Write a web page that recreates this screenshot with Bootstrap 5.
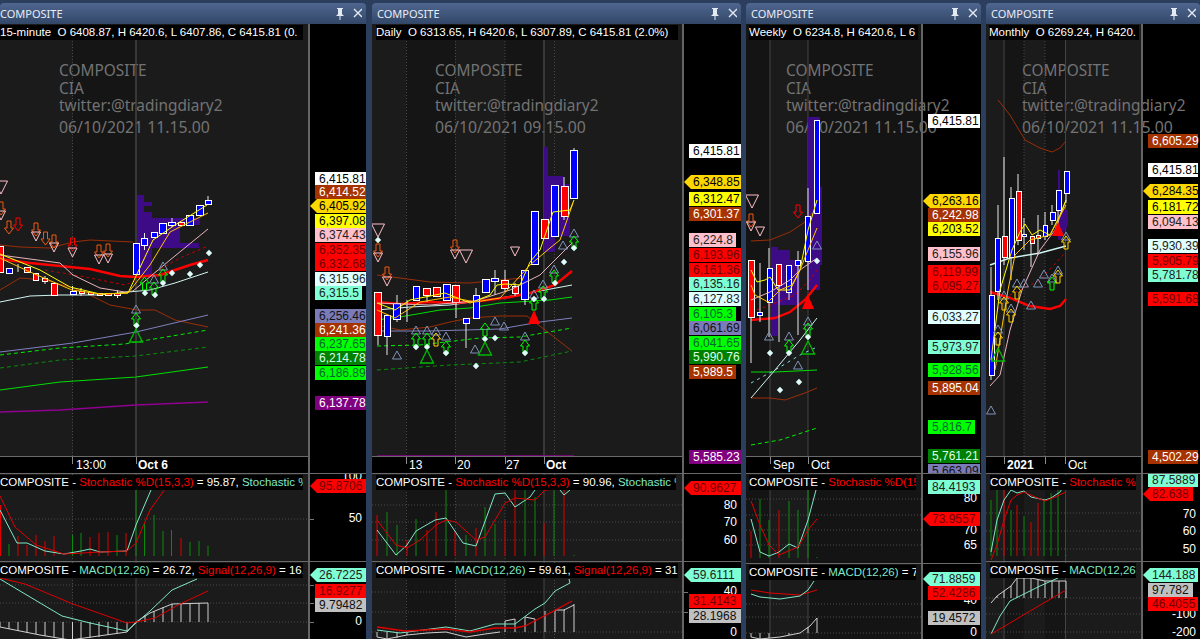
<!DOCTYPE html>
<html lang="en">
<head>
<meta charset="utf-8">
<title>COMPOSITE charts</title>
<link href="https://cdn.jsdelivr.net/npm/bootstrap@5.3.0/dist/css/bootstrap.min.css" rel="stylesheet">
<style>
html,body{height:639px;overflow:hidden;background:#2b3e5e;margin:0}
.desk{height:639px;padding-top:3px;font-family:"Liberation Sans",Arial,sans-serif;font-size:12px;line-height:14px}
.cwin{flex:none;overflow:hidden;border-radius:3px 3px 0 0;background:#000}
.w1{width:366px}.w2{width:369px;margin-left:6px}.w3{width:235px;margin-left:5px}.w4{width:214px;margin-left:5px}
.hd{height:21px;background:linear-gradient(#4f668f,#324768);color:#e8edf5;font:11px/21px "Noto Sans",sans-serif;padding-left:5px}
.w1 .hd{padding-left:0}
.hd svg{flex:none}
.pane{overflow:hidden;border-top:1px solid #6a6a6a;position:relative}
.pmain{height:449px;border-top:0}
.psto{height:88px}.w3 .psto{height:90px}
.pmac{flex:1 1 auto;height:78px}
.w3 .pmac{height:76px}
.plotcol{flex:none;position:relative}
.w1 .plotcol{width:308px;background:linear-gradient(90deg,#1b1b1b 73px,#151515 73px,#151515 136px,#1b1b1b 136px)}
.w2 .plotcol{width:310px;background:linear-gradient(90deg,#1b1b1b 34px,#151515 34px,#151515 83px,#1b1b1b 83px,#1b1b1b 133px,#151515 133px,#151515 172px,#1b1b1b 172px)}
.w3 .plotcol{width:175px;background:linear-gradient(90deg,#141414 24px,#1b1b1b 24px,#1b1b1b 62px,#141414 62px)}
.w4 .plotcol{width:155px;background:linear-gradient(90deg,#1b1b1b 18px,#151515 18px,#151515 38px,#1b1b1b 38px,#1b1b1b 59px,#151515 59px,#151515 79px,#1b1b1b 79px)}
.plotcol svg{display:block;position:relative;z-index:2}
.axis{flex:1 1 auto;position:relative;border-left:2px solid #646464;z-index:2}
.xstrip{height:17px;background:#000;border-top:1px solid #6a6a6a;position:relative;color:#fff;z-index:2}
.xstrip span{position:absolute;top:1px}
.xstrip i{position:absolute;top:0;width:1px;height:7px;background:#8a8a8a}
.xbold{font-weight:700}
.lg{position:absolute;top:1px;background:#000;color:#fff;height:15px;white-space:pre;overflow:hidden;z-index:3;font-size:11.5px}
.wm{position:absolute;top:38px;color:#737373;font:15.4px/18px "Noto Sans",sans-serif;white-space:nowrap;z-index:1;pointer-events:none}
.wm div:nth-child(3){line-height:15px}
.wm div:nth-child(4){margin-top:5px;font-size:15.8px}
.tg{position:absolute;left:5px;width:52px;height:14px;padding-left:4px;white-space:nowrap;color:#000;line-height:14px;font-size:12px}
.nar{width:47px}
.fl{left:0;width:57px;padding-left:9px;clip-path:polygon(0 50%,7px 0,100% 0,100% 100%,7px 100%)}
.kw{background:#fff}.kb{background:#a63200;color:#fff}.kg{background:#ffd700}.ky{background:#ff0}.kp{background:#ffc0cb;color:#222}
.kr{background:#f00;color:#700000}.kc{background:#e0ffff;color:#222}.ka{background:#7fffd4;color:#222}.ks{background:#7b7bb8;color:#111}
.kl{background:#0f0;color:#063}.kd{background:#008000;color:#dfe}.kv{background:#800080;color:#fff}.kh{background:#c0c0c0;color:#111}
.tk{position:absolute;right:4px;color:#fff;height:14px}
.tm{position:absolute;left:0;width:4px;height:1px;background:#777}
.tred{color:#f00}.taq{color:#7fe8c8}
.gr{stroke:#4a4a4a;stroke-dasharray:1 2;fill:none}
.vs{stroke:#444;fill:none}
.pu{fill:#3d0b86}
.cu{fill:#00f;stroke:#fff}.cd{fill:#f00;stroke:#fff}.wk{stroke:#e8e8e8;fill:none}
polyline,.ln{fill:none}
.lr{stroke:#f00;stroke-width:2.4}.lr1{stroke:#e00000}.ly{stroke:#ff0}.lo{stroke:#ffc400}.lb{stroke:#9a2e08}.lc{stroke:#cff5f0}.lp{stroke:#e8b4bc}
.ls{stroke:#8080c0}.ll{stroke:#0d0}.lq{stroke:#0e0;stroke-dasharray:4 3}.ld{stroke:#0a8a0a;stroke-dasharray:4 3}.lv{stroke:#900090;stroke-width:1.6}
.lx{stroke:#c00000;stroke-dasharray:3 3}.la{stroke:#7fe8c8}.lh{stroke:#c8c8c8}.lz{stroke:#7dd;stroke-dasharray:3 4}
.hr{stroke:#e00000;fill:none}.hg{stroke:#0a8a0a;fill:none}.hw{stroke:#cfcfcf;fill:none}
.mi{stroke:#ffc0cb;fill:none}.mo{stroke:#f05a10;fill:none}.mr{stroke:#f00;fill:none}.mu{stroke:#7f93b8;fill:none}.mg{stroke:#0b0;fill:none;stroke-width:1.3}
.mal{stroke:#0f0;fill:none}.may{stroke:#ffd200;fill:none}.mdi{fill:#dffdfb}.mrt{fill:#f00}
</style>
</head>
<body>
<svg class="d-none" width="0" height="0">
<defs>
<path id="ti" class="mi" d="M-4.5 0H4.5L0 9Z"/>
<path id="tI" class="mi" d="M-6.5 0H6.5L0 13Z"/>
<path id="ao" class="mo" d="M-2 0H2V7H4.5L0 13L-4.5 7H-2Z"/>
<path id="ar" class="mr" d="M-2 0H2V7H4.5L0 13L-4.5 7H-2Z"/>
<path id="tu" class="mu" d="M0 0L4.5 8H-4.5Z"/>
<path id="tg" class="mg" d="M0 0L6.5 13H-6.5Z"/>
<path id="al" class="mal" d="M0 0L4.5 6H2V13H-2V6H-4.5Z"/>
<path id="ay" class="may" d="M0 0L4.5 6H2V13H-2V6H-4.5Z"/>
<path id="di" class="mdi" d="M0 -3.2L3.2 0L0 3.2L-3.2 0Z"/>
<path id="rt" class="mrt" d="M0 0L6 14H-6Z"/>
<g id="pinx"><path d="M3 0H9V1H8V6L10 8H6.5V12H5.5V8H2L4 6V1H3Z" fill="#e4eaf3"/><path d="M20 1L28 9M28 1L20 9" stroke="#e4eaf3" stroke-width="1.4" fill="none"/></g>
</defs>
</svg>

<div class="desk d-flex">

<!-- 15-minute -->
<section class="cwin w1 d-flex flex-column">
<div class="hd d-flex align-items-center justify-content-between"><span>COMPOSITE</span><svg width="28" height="12" viewBox="0 0 28 12" class="me-1"><use href="#pinx"/></svg></div>
<div class="pane pmain d-flex">
<div class="wm" style="left:59px"><div>COMPOSITE</div><div>CIA</div><div>twitter:@tradingdiary2</div><div>06/10/2021 11.15.00</div></div>
<div class="plotcol">
<div class="lg" style="left:0;width:303px">15-minute  O 6408.87, H 6420.6, L 6407.86, C 6415.81 (0.</div>
<svg width="308" height="432" viewBox="0 24 308 432">
<path class="gr" d="M72.5 38V456"/><path class="vs" d="M136 38V456" stroke-width="1.5"/>
<path class="pu" d="M137 195H144V202H152V206H144V212H152V218H200V225H180V243H199V248H152V275H137Z"/>
<polyline class="lb" points="0,245 20,247 50,248 73,242 90,240 133,242"/>
<polyline class="lb" points="0,290 20,278 45,280 73,288 90,295 110,305 137,310 155,310 175,320 208,327"/>
<polyline class="lv" points="0,412 60,410 136,405 208,402"/>
<polyline class="ll" stroke-width="1.2" points="0,390 60,382 136,377 208,367"/>
<polyline class="ld" points="0,368 60,360 136,356 208,347"/>
<polyline class="lq" points="0,355 60,348 125,344 136,342 208,330"/>
<polyline class="ls" points="0,352 73,343 136,332 208,315"/>
<polyline class="lc" points="0,302 30,296 60,295 100,295 128,292 150,290 175,283 208,272"/>
<polyline class="lx" points="45,270 80,276 125,285 150,275 180,258 208,246"/>
<polyline class="lr" points="0,259 30,263 60,266 90,269 120,276 136,277 160,275 175,270 190,265 208,260"/>
<path class="wk" d="M18 264V272M72.5 286V295M81 288V296M45 276V284M117.5 290V298M144.5 233V250M172 218V227M208 196V204"/>
<rect class="cd" x="-2.5" y="246.5" width="6" height="26"/><rect class="cu" x="6.5" y="268.5" width="6" height="5"/>
<rect class="cd" x="24.5" y="267.5" width="6" height="5"/><rect class="cd" x="33.5" y="273.5" width="5" height="7"/>
<rect class="cd" x="42.5" y="278.5" width="5" height="3"/><rect class="cd" x="51.5" y="283.5" width="6" height="12"/>
<rect class="cu" x="70.5" y="291.5" width="6" height="3"/><rect class="cd" x="79.5" y="291.5" width="5" height="2"/>
<rect class="cd" x="88.5" y="292.5" width="5" height="2"/><rect class="cd" x="97.5" y="293.5" width="5" height="2"/>
<rect class="cd" x="105.5" y="293.5" width="6" height="2"/><rect class="cd" x="114.5" y="293.5" width="6" height="2"/>
<rect class="cu" x="133.5" y="243.5" width="6" height="31"/><rect class="cu" x="141.5" y="238.5" width="6" height="7"/>
<rect class="cu" x="151.5" y="232.5" width="6" height="5"/><rect class="cu" x="159.5" y="223.5" width="7" height="10"/>
<rect class="cu" x="168.5" y="222.5" width="7" height="3"/><rect class="cd" x="178.5" y="222.5" width="6" height="3"/>
<rect class="cu" x="186.5" y="215.5" width="7" height="10"/><rect class="cu" x="196.5" y="205.5" width="7" height="10"/>
<rect class="cu" x="205.5" y="200.5" width="6" height="4"/>
<polyline class="lp" points="0,255 30,259 60,263 73,275 100,288 125,292 133,291 170,260 208,229"/>
<polyline class="ly" points="0,254 40,270 70,287 100,294 128,293 153,240 175,225 207,205"/>
<polyline class="lo" points="0,258 30,272 72,290 100,294 128,293 150,265 170,232 190,222 208,213"/>
<use href="#tI" x="1" y="181"/><use href="#ao" x="1" y="202"/><use href="#ti" x="1" y="211"/>
<use href="#ao" x="9" y="221"/><use href="#ar" x="18" y="218"/><use href="#ao" x="36" y="223"/><use href="#ti" x="36" y="232"/>
<use href="#ao" x="45.5" y="232"/><use href="#ao" x="54" y="235"/><use href="#ti" x="54" y="243"/>
<use href="#ar" x="72.5" y="238"/><use href="#ti" x="72.5" y="248"/><use href="#ao" x="99" y="245"/><use href="#ti" x="99" y="255"/>
<use href="#ao" x="108" y="244"/><use href="#ti" x="108" y="254"/>
<use href="#tu" x="136" y="305"/><use href="#al" x="136" y="313"/><use href="#di" x="136.5" y="325.5"/><use href="#tg" x="136" y="329"/>
<use href="#al" x="144.5" y="277"/><use href="#di" x="145" y="293"/><use href="#tu" x="154" y="275"/><use href="#al" x="154" y="282"/><use href="#di" x="155" y="295"/>
<use href="#tu" x="163" y="262"/><use href="#al" x="163" y="269"/><use href="#di" x="163" y="283"/>
<use href="#di" x="172" y="273"/><use href="#di" x="190" y="274"/><use href="#di" x="200" y="265"/><use href="#di" x="209" y="253"/>
</svg>
<div class="xstrip"><i style="left:72px"></i><i style="left:136px"></i><span style="left:76px">13:00</span><span class="xbold" style="left:138px">Oct 6</span></div>
</div>
<div class="axis">
<div class="tg kw" style="top:148px">6,415.81</div><div class="tg kb" style="top:161px">6,414.52</div>
<div class="tg kg fl" style="top:175px">6,405.92</div><div class="tg ky" style="top:190px">6,397.08</div>
<div class="tg kp" style="top:204px">6,374.43</div><div class="tg kr" style="top:219px">6,352.35</div>
<div class="tg kr" style="top:233px">6,332.68</div><div class="tg kc" style="top:248px">6,315.96</div>
<div class="tg ka nar" style="top:262px">6,315.5</div><div class="tg ks" style="top:285px">6,256.46</div>
<div class="tg kb" style="top:299px">6,241.36</div><div class="tg kl" style="top:313px">6,237.65</div>
<div class="tg kd" style="top:327px">6,214.78</div><div class="tg kl" style="top:342px">6,186.89</div>
<div class="tg kv" style="top:372px">6,137.78</div>
</div>
</div>
<div class="pane psto d-flex">
<div class="plotcol">
<div class="lg" style="left:0;width:303px">COMPOSITE - <span class="tred">Stochastic %D(15,3,3)</span> = 95.87, <span class="taq">Stochastic %D(15,3,3)</span></div>
<svg width="308" height="87" viewBox="0 474 308 87">
<path class="gr" d="M0 519H308M72.5 474V561"/><path class="vs" d="M136 474V561"/>
<path class="hr" d="M.5 556V505M18 556V536M27 556V545M36 556V535M45 556V541M54 556V536M90 556V537M99 556V533M108 556V532M126 556V533M181 556V538"/>
<path class="hg" d="M9 556V544M72.5 556V535M81 556V533M117 556V535M136 556V490M144.5 556V523M154 556V515M163 556V531M171.5 556V530M190 556V542M199 556V541M208 556V546"/>
<polyline class="la" points="0,510 17,543 27,543 45,551 64,554 81,551 90,549 100,552 127,551 136,525 151,490"/>
<polyline class="lr1" points="0,496 15,527 36,545 64,554 100,552 127,551 136,543 150,510 165,489"/>
</svg>
</div>
<div class="axis">
<div class="tm" style="top:45px"></div><div class="tk" style="top:-5px">100</div><div class="tk" style="top:37px">50</div>
<div class="tg kr fl" style="top:5px">95.8706</div>
</div>
</div>
<div class="pane pmac d-flex">
<div class="plotcol">
<div class="lg" style="left:0;width:303px">COMPOSITE - <span class="taq">MACD(12,26)</span> = 26.72, <span class="tred">Signal(12,26,9)</span> = 16.</div>
<svg width="308" height="78" viewBox="0 561 308 78">
<path class="gr" d="M0 584H308M0 602H308M0 621H308M72.5 561V639"/><path class="vs" d="M136 561V639"/>
<path class="hw" d="M0 626L40 634 70 639 127 631 136 621 150 612 172 603 208 602V621M0 621V626M9 621V628M18 621V630M27 621V632M36 621V633M45 621V635M54 621V636M63 621V638M72.5 621V639M81 621V638M90 621V637M99 621V636M108 621V634M117 621V633M127 621V631M145 621V614M154 621V610M163 621V606M172 621V603M181 621V603M190 621V603M199 621V602"/>
<polyline class="la" points="0,578 20,590 62,615 90,622 127,630 136,622 150,610 172,589 197,578"/>
<polyline class="lr1" points="0,577 25,583 73,603 127,622 136,621 155,617 180,603 208,590"/>
</svg>
</div>
<div class="axis">
<div class="tm" style="top:23px"></div><div class="tm" style="top:41px"></div><div class="tm" style="top:60px"></div>
<div class="tk" style="top:52px">0</div>
<div class="tg ka fl" style="top:6px">26.7225</div><div class="tg kr" style="top:22px">16.9277</div><div class="tg kh" style="top:36px">9.79482</div>
</div>
</div>
</section>

<!-- Daily -->
<section class="cwin w2 d-flex flex-column">
<div class="hd d-flex align-items-center justify-content-between"><span>COMPOSITE</span><svg width="28" height="12" viewBox="0 0 28 12" class="me-1"><use href="#pinx"/></svg></div>
<div class="pane pmain d-flex">
<div class="wm" style="left:63px"><div>COMPOSITE</div><div>CIA</div><div>twitter:@tradingdiary2</div><div>06/10/2021 09.15.00</div></div>
<div class="plotcol">
<div class="lg" style="left:4px;width:302px">Daily  O 6313.65, H 6420.6, L 6307.89, C 6415.81 (2.0%)</div>
<svg width="310" height="432" viewBox="372 24 310 432">
<path class="gr" d="M406.5 38V456M455.5 38V456M505 38V456M554.5 38V456"/><path class="vs" d="M544 38V456" stroke-width="1.5"/>
<path class="pu" d="M544 147H548V176H563V184H570V236H555V252H544Z"/>
<polyline class="lb" points="377,275 400,278 430,282 470,283 500,280 523,278"/>
<polyline class="lb" points="377,325 400,330 430,327 450,322 470,318 500,316 527,316 545,330 572,351"/>
<polyline class="ld" points="377,370 450,365 520,362 572,351"/>
<polyline class="lq" points="377,346 420,345 480,338 520,337 572,328"/>
<polyline class="ls" points="377,331 430,331 500,329 540,322 572,318"/>
<polyline class="lv" stroke-width="2" points="377,456 574,456"/>
<polyline class="ll" points="377,320 400,317 440,310 470,308 500,303 550,300 572,297"/>
<polyline class="lc" points="377,310 410,307 450,305 500,298 540,291 572,285"/>
<polyline class="lr" points="377,302 400,304 430,302 455,303 480,301 510,297 530,293 555,285 572,271"/>
<path class="wk" d="M378 335V345M387 336V355M397 295V322M407 300V322M427 295V302M456 302V318M466 323V348M476 288V318M495 270V295M505 270V292M515 283V296M525 299V305M564 177V220M574 148V198"/>
<rect class="cd" x="374.5" y="292.5" width="7" height="43"/><rect class="cu" x="384.5" y="315.5" width="6" height="21"/>
<rect class="cu" x="393.5" y="303.5" width="7" height="16"/><rect class="cu" x="413.5" y="286.5" width="6" height="14"/>
<rect class="cd" x="423.5" y="288.5" width="7" height="7"/><rect class="cd" x="433.5" y="287.5" width="7" height="9"/>
<rect class="cu" x="443.5" y="284.5" width="7" height="16"/><rect class="cd" x="452.5" y="285.5" width="7" height="17"/>
<rect class="cu" x="463.5" y="318.5" width="6" height="5"/><rect class="cu" x="473.5" y="295.5" width="6" height="23"/>
<rect class="cu" x="482.5" y="279.5" width="7" height="13"/><rect class="cu" x="491.5" y="278.5" width="7" height="3"/>
<rect class="cd" x="501.5" y="280.5" width="7" height="8"/><rect class="cd" x="512.5" y="286.5" width="6" height="7"/>
<rect class="cu" x="521.5" y="270.5" width="7" height="29"/><rect class="cu" x="531.5" y="211.5" width="7" height="53"/>
<rect class="cd" x="541.5" y="219.5" width="7" height="19"/><rect class="cu" x="551.5" y="185.5" width="7" height="51"/>
<rect class="cd" x="561.5" y="186.5" width="7" height="30"/><rect class="cu" x="570.5" y="150.5" width="7" height="48"/>
<polyline class="lp" points="377,303 430,305 475,301 510,290 540,275 555,260 572,243"/>
<polyline class="ly" points="377,303 395,310 410,300 430,296 445,293 470,303 490,295 497,285 505,284 520,285 530,262 540,250 553,212 570,210 574,200"/>
<polyline class="lo" points="377,310 395,318 420,302 450,297 475,302 500,298 530,265 550,248 560,240 573,203"/>
<use href="#tI" x="378" y="224"/><use href="#di" x="378" y="240"/><use href="#ao" x="378" y="244"/><use href="#ti" x="378" y="253"/>
<use href="#ao" x="387" y="267"/><use href="#ti" x="387" y="277"/><use href="#tu" x="397" y="351"/>
<use href="#tu" x="416" y="326"/><use href="#al" x="416" y="333"/><use href="#di" x="416" y="347"/>
<use href="#tu" x="427" y="326"/><use href="#al" x="427" y="333"/><use href="#di" x="427" y="347"/>
<use href="#tu" x="436" y="327"/><use href="#ay" x="436" y="333"/><use href="#tg" x="427" y="350"/>
<use href="#tu" x="446" y="332"/><use href="#al" x="446" y="341"/><use href="#di" x="446" y="353"/>
<use href="#ao" x="455" y="240"/><use href="#ti" x="455" y="250"/><use href="#tI" x="466" y="250"/>
<use href="#tu" x="475" y="345"/><use href="#al" x="485" y="323"/><use href="#di" x="485" y="339"/><use href="#tg" x="485" y="342"/>
<use href="#tu" x="495" y="317"/><use href="#tu" x="504" y="322"/><use href="#di" x="495" y="338"/><use href="#ti" x="515" y="247"/>
<use href="#tu" x="525" y="332"/><use href="#al" x="525" y="340"/><use href="#di" x="525" y="353"/><use href="#rt" x="534" y="310"/>
<use href="#tu" x="534" y="290"/><use href="#al" x="534" y="297"/><use href="#di" x="534" y="299"/>
<use href="#tu" x="543" y="280"/><use href="#al" x="543" y="286"/><use href="#di" x="544" y="299"/>
<use href="#tu" x="554" y="265"/><use href="#al" x="554" y="270"/><use href="#di" x="555" y="283"/>
<use href="#tu" x="563" y="241"/><use href="#di" x="564" y="262"/><use href="#tu" x="574" y="229"/><use href="#al" x="574" y="236"/><use href="#di" x="574" y="248"/>
<use href="#di" x="476" y="366"/>
</svg>
<div class="xstrip"><i style="left:34px"></i><i style="left:83px"></i><i style="left:133px"></i><i style="left:172px"></i><span style="left:37px">13</span><span style="left:85px">20</span><span style="left:134px">27</span><span class="xbold" style="left:174px">Oct</span></div>
</div>
<div class="axis">
<div class="tg kw" style="top:120px">6,415.81</div><div class="tg kg fl" style="top:151px">6,348.85</div>
<div class="tg ky" style="top:168px">6,312.47</div><div class="tg kb" style="top:183px">6,301.37</div>
<div class="tg kp nar" style="top:209px">6,224.8</div><div class="tg kr" style="top:224px">6,193.96</div>
<div class="tg kr" style="top:239px">6,161.36</div><div class="tg ka" style="top:253px">6,135.16</div>
<div class="tg kc" style="top:268px">6,127.83</div><div class="tg kl nar" style="top:283px">6,105.3</div>
<div class="tg ks" style="top:297px">6,061.69</div><div class="tg kl" style="top:312px">6,041.65</div>
<div class="tg kd" style="top:326px">5,990.76</div><div class="tg kb nar" style="top:341px">5,989.5</div>
<div class="tg kv" style="top:426px">5,585.23</div>
</div>
</div>
<div class="pane psto d-flex">
<div class="plotcol">
<div class="lg" style="left:4px;width:300px">COMPOSITE - <span class="tred">Stochastic %D(15,3,3)</span> = 90.96, <span class="taq">Stochastic %D(15,3,3)</span></div>
<svg width="310" height="87" viewBox="372 474 310 87">
<path class="gr" d="M372 505H682M372 522H682M372 540H682M406.5 474V561M455.5 474V561M505 474V561M554.5 474V561"/><path class="vs" d="M544 474V561"/>
<path class="hr" d="M377 556V515M407 556V540M427 556V530M436 556V512M455 556V530M476 556V528M505 556V520M515 556V490M544 556V523M564 556V490"/>
<path class="hg" d="M387 556V512M397 556V525M416 556V519M446 556V490M466 556V535M485 556V507M495 556V524M525 556V490M535 556V497M554 556V490M574 556V555"/>
<polyline class="la" points="377,530 396,555 407,545 416,531 435,520 446,518 463,543 476,546 495,494 505,493 515,507 530,497 535,490"/>
<polyline class="la" points="560,490 564,495 570,490"/>
<polyline class="lr1" points="377,520 396,545 407,548 420,540 436,525 446,520 456,522 476,540 485,537 505,503 515,498 535,500 545,490 575,488"/>
</svg>
</div>
<div class="axis">
<div class="tk" style="top:24px">80</div><div class="tk" style="top:41px">70</div><div class="tk" style="top:59px">60</div>
<div class="tg kr fl" style="top:7px">90.9627</div>
</div>
</div>
<div class="pane pmac d-flex">
<div class="plotcol">
<div class="lg" style="left:4px;width:302px">COMPOSITE - <span class="taq">MACD(12,26)</span> = 59.61, <span class="tred">Signal(12,26,9)</span> = 31</div>
<svg width="310" height="78" viewBox="372 561 310 78">
<path class="gr" d="M372 591H682M372 611H682M372 631H682M406.5 561V639M455.5 561V639M505 561V639M554.5 561V639"/><path class="vs" d="M544 561V639"/>
<path class="hw" d="M377 631V636L387 638 407 634 427 632 446 631 466 636 485 633 500 631M387 631V638M397 631V637M407 631V634M505 631V620L515 618M515 631V618M525 631V616L535 618M535 631V618M545 631V610M555 631V609L565 609M564 631V609L574 604M574 631V603"/>
<polyline class="la" points="377,629 400,632 446,626 470,630 495,623 515,623 535,608 545,602 555,590 570,582 569,578"/>
<polyline class="lr1" stroke-width="1.3" points="377,626 405,630 446,628 470,631 495,627 515,627 525,625 550,612 572,600"/>
</svg>
</div>
<div class="axis">
<div class="tm" style="top:30px"></div><div class="tm" style="top:50px"></div>
<div class="tk" style="top:22px">40</div><div class="tk" style="top:63px">0</div>
<div class="tg ka fl" style="top:6px">59.6111</div><div class="tg kr" style="top:32px">31.4143</div><div class="tg kh" style="top:47px">28.1968</div>
</div>
</div>
</section>

<!-- Weekly -->
<section class="cwin w3 d-flex flex-column">
<div class="hd d-flex align-items-center justify-content-between"><span>COMPOSITE</span><svg width="28" height="12" viewBox="0 0 28 12" class="me-1"><use href="#pinx"/></svg></div>
<div class="pane pmain d-flex">
<div class="wm" style="left:40px"><div>COMPOSITE</div><div>CIA</div><div>twitter:@tradingdiary2</div><div>06/10/2021 11.15.00</div></div>
<div class="plotcol">
<div class="lg" style="left:3px;width:169px">Weekly  O 6234.8, H 6420.6, L 6</div>
<svg width="175" height="432" viewBox="746 24 175 432">
<path class="vs" d="M770 38V456M808 38V456"/>
<path class="pu" d="M771 247H778V250H790V260H800V305H771ZM771 305H778V336H771ZM808 117H820V187H822V265H820V290H808Z"/>
<polyline class="lb" points="751,241 770,240 790,232 805,222 812,213"/>
<polyline class="lb" points="751,398 770,398 785,400 805,393 817,388"/>
<polyline class="ll" points="751,372 775,372 817,370"/>
<polyline class="lz" points="751,383 775,370 800,355 817,347"/>
<polyline class="lq" points="751,445 780,440 817,428"/>
<polyline class="lc" points="751,398 775,370 800,340 817,318"/>
<polyline class="lr" points="751,320 775,318 790,312 805,300 817,285"/>
<polyline class="lx" points="757,310 775,303 795,295 810,280 817,270"/>
<path class="wk" d="M751 317V363M760 263V322M769 248V337M779 285V342M789 265V300M798 251V335M808 188V290"/>
<rect class="cd" x="748.5" y="260.5" width="6" height="57"/><rect class="cu" x="757.5" y="312.5" width="5" height="3"/>
<rect class="cu" x="767.5" y="268.5" width="5" height="34"/><rect class="cd" x="776.5" y="264.5" width="5" height="21"/>
<rect class="cu" x="786.5" y="265.5" width="5" height="27"/><rect class="cu" x="795.5" y="260.5" width="5" height="5"/>
<rect class="cu" x="805.5" y="216.5" width="5" height="45"/><rect class="cu" x="814.5" y="120.5" width="5" height="93"/>
<polyline class="lp" points="751,300 770,292 790,280 800,270 817,258"/>
<polyline class="ly" points="751,270 757,282 765,280 770,277 778,290 790,290 800,270 808,230 817,200"/>
<polyline class="lo" points="751,285 755,295 768,302 780,290 792,285 800,270 808,250 817,228"/>
<use href="#tI" x="752" y="195"/><use href="#ao" x="751" y="214"/><use href="#ti" x="751" y="222"/><use href="#ti" x="760" y="227"/>
<use href="#ar" x="798" y="205"/><use href="#rt" x="808" y="295"/>
<use href="#tu" x="769" y="332"/><use href="#tu" x="789" y="332"/><use href="#al" x="789" y="340"/><use href="#di" x="770" y="353"/><use href="#di" x="789" y="353"/>
<use href="#tu" x="808" y="317"/><use href="#al" x="808" y="323"/><use href="#di" x="808" y="337"/><use href="#tg" x="808" y="341"/>
<use href="#tu" x="817" y="241"/><use href="#di" x="817" y="261"/><use href="#tu" x="798" y="361"/><use href="#di" x="780" y="390"/><use href="#di" x="799" y="382"/>
</svg>
<div class="xstrip"><i style="left:24px"></i><i style="left:62px"></i><span style="left:27px">Sep</span><span style="left:65px">Oct</span></div>
</div>
<div class="axis">
<div class="tg kw" style="top:90px">6,415.81</div><div class="tg kg fl" style="top:170px">6,263.16</div>
<div class="tg kb" style="top:184px">6,242.98</div><div class="tg ky" style="top:198px">6,203.52</div>
<div class="tg kp" style="top:223px">6,155.96</div><div class="tg kr" style="top:241px">6,119.99</div>
<div class="tg kr" style="top:255px">6,095.27</div><div class="tg kc" style="top:286px">6,033.27</div>
<div class="tg ka" style="top:316px">5,973.97</div><div class="tg kl" style="top:339px">5,928.56</div>
<div class="tg kb" style="top:357px">5,895.04</div><div class="tg kl nar" style="top:396px">5,816.7</div>
<div class="tg kd" style="top:425px">5,761.21</div><div class="tg ks" style="top:440px">5,663.09</div>
</div>
</div>
<div class="pane psto d-flex">
<div class="plotcol">
<div class="lg" style="left:3px;width:167px">COMPOSITE - <span class="tred">Stochastic %D(15,3,3)</span></div>
<svg width="175" height="89" viewBox="746 474 175 89">
<path class="gr" d="M746 499H921M746 515H921M746 530H921M746 545H921"/><path class="vs" d="M770 474V563M808 474V563"/>
<path class="hr" d="M751 558V531M779 558V510"/>
<path class="hg" d="M760 558V499M769 558V520M789 558V501M798 558V510M808 558V490M817 558V557"/>
<polyline class="la" points="751,519 760,552 769,556 779,552 789,544 798,548 808,520 816,490"/>
<polyline class="lr1" points="751,501 760,525 769,545 779,555 798,547 808,530 817,519"/>
</svg>
</div>
<div class="axis">
<div class="tk" style="top:17px">80</div><div class="tk" style="top:49px">70</div><div class="tk" style="top:64px">65</div>
<div class="tg ka" style="top:6px">84.4193</div><div class="tg kr fl" style="top:38px">73.9557</div>
</div>
</div>
<div class="pane pmac d-flex">
<div class="plotcol">
<div class="lg" style="left:3px;width:167px">COMPOSITE - <span class="taq">MACD(12,26)</span> = 7</div>
<svg width="175" height="76" viewBox="746 563 175 76">
<path class="gr" d="M746 603H921M746 616H921M746 632H921"/><path class="vs" d="M770 563V639M808 563V639"/>
<path class="hw" d="M751 632V636L760 638 780 636 800 632 810 625 817 617V632M760 632V638M769 632V637M789 632V634M808 632V626"/>
<polyline class="lr1" points="751,589 770,592 800,594 817,589"/>
<polyline class="la" points="751,593 760,596 780,598 800,595 808,589 814,580"/>
</svg>
</div>
<div class="axis">
<div class="tk" style="top:29px">40</div><div class="tk" style="top:61px">0</div>
<div class="tg ka fl" style="top:8px">71.8859</div><div class="tg kr" style="top:22px">52.4286</div><div class="tg kh" style="top:47px">19.4572</div>
</div>
</div>
</section>

<!-- Monthly -->
<section class="cwin w4 d-flex flex-column">
<div class="hd d-flex align-items-center justify-content-between"><span>COMPOSITE</span><svg width="28" height="12" viewBox="0 0 28 12" class="me-1"><use href="#pinx"/></svg></div>
<div class="pane pmain d-flex">
<div class="wm" style="left:36px"><div>COMPOSITE</div><div>CIA</div><div>twitter:@tradingdiary2</div><div>06/10/2021 11.15.00</div></div>
<div class="plotcol">
<div class="lg" style="left:3px;width:150px">Monthly  O 6269.24, H 6420.</div>
<svg width="155" height="432" viewBox="986 24 155 432">
<path class="gr" d="M1024 38V456M1045 38V456"/><path class="vs" d="M1004 38V456M1065.5 38V456"/>
<path class="pu" d="M1058 170H1060V210H1068V225L1060 240H1058Z"/>
<polyline class="lb" points="998,100 1010,115 1025,140 1040,148 1052,152 1060,148 1066,141"/>
<polyline class="lc" stroke-width="1.4" points="990,265 1010,258 1040,253 1066,246"/>
<polyline class="lr" points="990,292 1010,298 1030,306 1050,309 1060,306 1066,299"/>
<polyline class="lx" points="990,318 1010,295 1040,280 1066,252"/>
<path class="wk" d="M991 267V380M998 205V300M1004 157V265M1011 187V280M1018 174V245M1024 218V250M1031 243V267M1038 215V255M1045 212V240M1052 205V225M1058 190V228M1066 171V203"/>
<rect class="cu" x="989.5" y="295.5" width="5" height="80"/><rect class="cu" x="995.5" y="238.5" width="5" height="53"/>
<rect class="cd" x="1002.5" y="236.5" width="5" height="21"/><rect class="cu" x="1009.5" y="198.5" width="5" height="59"/>
<rect class="cd" x="1016.5" y="191.5" width="5" height="49"/><rect class="cu" x="1022.5" y="234.5" width="4" height="2"/>
<rect class="cd" x="1030.5" y="236.5" width="4" height="7"/><rect class="cd" x="1036.5" y="235.5" width="4" height="3"/>
<rect class="cu" x="1043.5" y="225.5" width="4" height="11"/><rect class="cu" x="1050.5" y="212.5" width="5" height="8"/>
<rect class="cu" x="1056.5" y="190.5" width="5" height="20"/><rect class="cu" x="1064.5" y="171.5" width="5" height="22"/>
<polyline class="lp" points="990,386 1000,375 1010,330 1022,290 1040,250 1055,230 1066,200"/>
<polyline class="ly" points="991,360 1000,290 1012,250 1020,232 1025,224 1032,235 1040,230 1050,235 1060,215 1066,200"/>
<polyline class="lo" points="995,370 1008,290 1015,255 1030,240 1050,235 1066,205"/>
<use href="#tu" x="991" y="406"/><use href="#tu" x="998" y="325"/><use href="#ay" x="998" y="332"/><use href="#tg" x="998" y="348"/>
<use href="#tu" x="1004" y="291"/><use href="#ay" x="1004" y="297"/><use href="#tu" x="1011" y="304"/><use href="#ay" x="1011" y="309"/>
<use href="#tu" x="1017" y="279"/><use href="#ay" x="1017" y="286"/><use href="#tu" x="1024" y="279"/><use href="#tu" x="1038" y="279"/><use href="#tu" x="1031" y="301"/>
<use href="#tu" x="1044" y="270"/><use href="#tu" x="1052" y="274"/><use href="#al" x="1052" y="277"/><use href="#tu" x="1058" y="266"/><use href="#ay" x="1058" y="270"/>
<use href="#rt" x="1058" y="222"/><use href="#tu" x="1066" y="232"/><use href="#ay" x="1066" y="236"/>
</svg>
<div class="xstrip"><i style="left:18px"></i><i style="left:59px"></i><i style="left:79px"></i><span class="xbold" style="left:21px">2021</span><span style="left:82px">Oct</span></div>
</div>
<div class="axis">
<div class="tg kb" style="top:110px;width:50px">6,605.29</div><div class="tg kw" style="top:139px;width:50px">6,415.81</div>
<div class="tg kg fl" style="top:160px;width:55px">6,284.35</div><div class="tg ky" style="top:176px;width:50px">6,181.72</div>
<div class="tg kp" style="top:191px;width:50px">6,094.13</div><div class="tg kc" style="top:215px;width:50px">5,930.39</div>
<div class="tg kr" style="top:230px;width:50px">5,905.79</div><div class="tg ka" style="top:244px;width:50px">5,781.78</div>
<div class="tg kr" style="top:268px;width:50px">5,591.68</div><div class="tg kb" style="top:426px;width:50px">4,502.29</div>
</div>
</div>
<div class="pane psto d-flex">
<div class="plotcol">
<div class="lg" style="left:4px;width:146px">COMPOSITE - <span class="tred">Stochastic %D(15,3,3)</span></div>
<svg width="155" height="87" viewBox="986 474 155 87">
<path class="gr" d="M986 513H1141M986 531H1141M986 549H1141"/><path class="vs" d="M1004 474V561M1065.5 474V561"/>
<path class="hg" d="M991 556V500M997 556V489M1011 556V510M1024 556V516M1044 556V500M1051 556V493M1058 556V490M1066 556V555"/>
<path class="hr" d="M1004 556V490M1017 556V505M1031 556V522M1038 556V503"/>
<polyline class="la" points="991,552 997,520 1004,500 1011,490 1017,493 1024,491 1031,497 1045,500 1051,498 1060,492 1062,489"/>
<polyline class="lr1" points="991,560 997,545 1004,520 1011,500 1017,495 1024,492 1035,497 1045,501 1055,497 1066,492"/>
</svg>
</div>
<div class="axis">
<div class="tk" style="top:33px">70</div><div class="tk" style="top:50px">60</div><div class="tk" style="top:68px">50</div>
<div class="tg ka" style="top:-1px;width:50px">87.5889</div><div class="tg kr fl" style="top:13px;width:50px">82.638</div>
</div>
</div>
<div class="pane pmac d-flex">
<div class="plotcol">
<div class="lg" style="left:4px;width:146px">COMPOSITE - <span class="taq">MACD(12,26)</span></div>
<svg width="155" height="78" viewBox="986 561 155 78">
<path class="gr" d="M986 597H1141M986 613H1141M986 631H1141"/><path class="vs" d="M1004 561V639M1065.5 561V639"/>
<path class="hw" d="M991 602L997 595 1004 590 1011 585 1017 577 1031 577 1045 580 1066 580V597M997 597V595M1004 597V590M1011 597V585M1017 597V577M1024 597V577M1031 597V577M1038 597V579M1045 597V580M1052 597V580M1059 597V580"/>
<polyline class="la" points="991,633 1000,615 1010,600 1020,595 1040,585 1058,577"/>
<polyline class="lr1" points="991,633 1005,625 1030,610 1066,589"/>
</svg>
</div>
<div class="axis">
<div class="tk" style="top:45px">-100</div><div class="tk" style="top:63px">-200</div>
<div class="tg ka fl" style="top:6px;width:55px">144.188</div><div class="tg kh" style="top:21px;width:45px">97.782</div><div class="tg kr" style="top:35px;width:50px">46.4055</div>
</div>
</div>
</section>

</div>
<script src="https://cdn.jsdelivr.net/npm/bootstrap@5.3.0/dist/js/bootstrap.bundle.min.js"></script>
</body>
</html>
